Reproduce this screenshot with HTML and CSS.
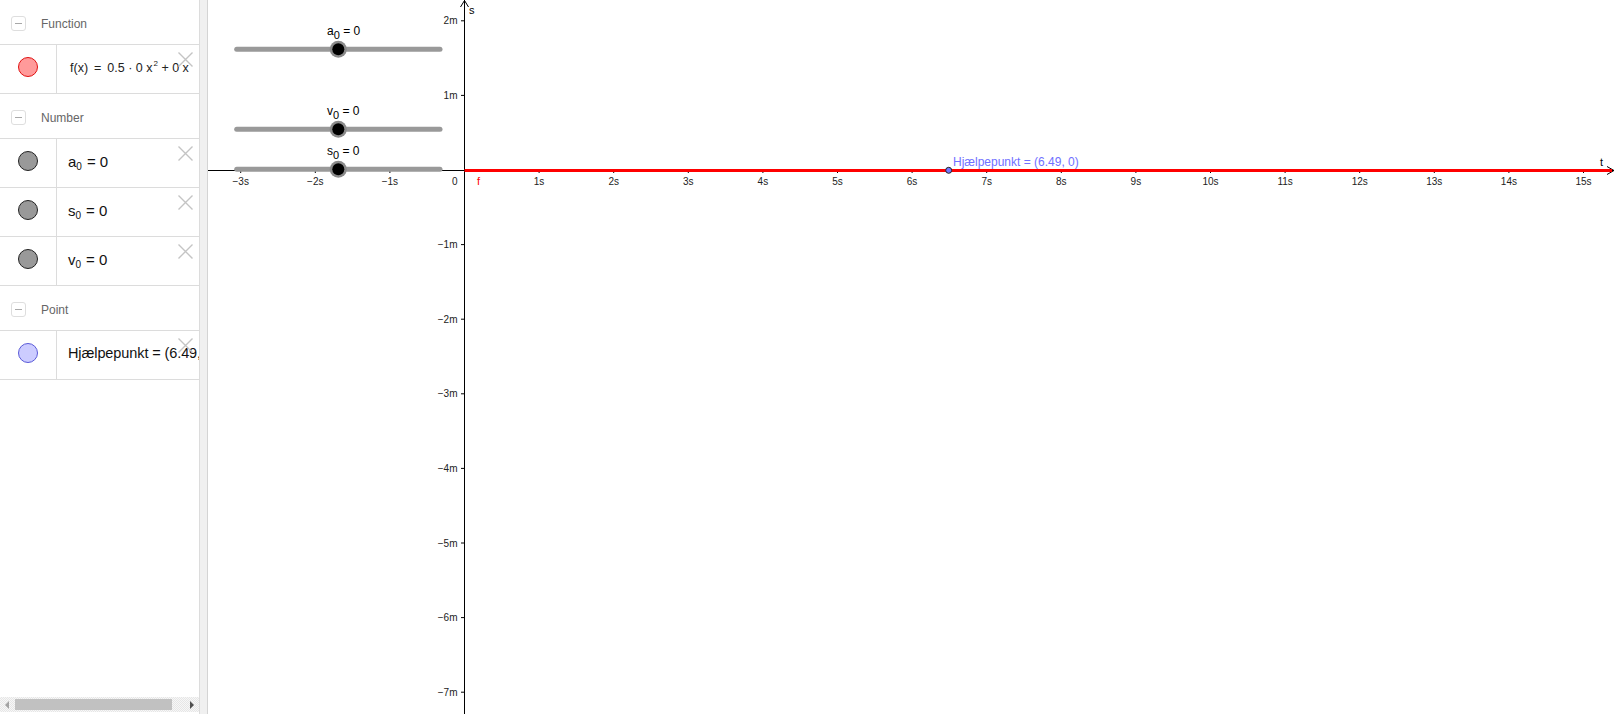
FILE: index.html
```html
<!DOCTYPE html>
<html>
<head>
<meta charset="utf-8">
<title>Graph</title>
<link rel="stylesheet" href="styles.css">
</head>
<body>
<div class="app">
  <aside class="algebra">
    <div class="list">
      <div class="group-head"><span class="toggle"></span><span class="group-name">Function</span></div>
      <div class="item">
        <div class="marker"><span class="dot dot-red"></span></div>
        <div class="formula formula-fn">f(x)&thinsp; = &thinsp;0.5 · 0 x<sup>2</sup> + 0 x</div>
        <svg class="del" viewBox="0 0 15 15"><path d="M0.5 0.5L14.5 14.5M14.5 0.5L0.5 14.5"/></svg>
      </div>

      <div class="group-head"><span class="toggle"></span><span class="group-name">Number</span></div>
      <div class="item">
        <div class="marker"><span class="dot dot-gray"></span></div>
        <div class="formula">a<sub>0</sub>&thinsp;= 0</div>
        <svg class="del" viewBox="0 0 15 15"><path d="M0.5 0.5L14.5 14.5M14.5 0.5L0.5 14.5"/></svg>
      </div>
      <div class="item">
        <div class="marker"><span class="dot dot-gray"></span></div>
        <div class="formula">s<sub>0</sub>&thinsp;= 0</div>
        <svg class="del" viewBox="0 0 15 15"><path d="M0.5 0.5L14.5 14.5M14.5 0.5L0.5 14.5"/></svg>
      </div>
      <div class="item">
        <div class="marker"><span class="dot dot-gray"></span></div>
        <div class="formula">v<sub>0</sub>&thinsp;= 0</div>
        <svg class="del" viewBox="0 0 15 15"><path d="M0.5 0.5L14.5 14.5M14.5 0.5L0.5 14.5"/></svg>
      </div>

      <div class="group-head"><span class="toggle"></span><span class="group-name">Point</span></div>
      <div class="item">
        <div class="marker"><span class="dot dot-blue"></span></div>
        <div class="formula formula-pt">Hjælpepunkt = (6.49, 0)</div>
        <svg class="del" viewBox="0 0 15 15"><path d="M0.5 0.5L14.5 14.5M14.5 0.5L0.5 14.5"/></svg>
      </div>
    </div>
    <div class="hscroll">
      <span class="arrow arrow-left"></span>
      <span class="thumb"></span>
      <span class="arrow arrow-right"></span>
    </div>
  </aside>
  <div class="splitter"></div>
  <main class="graphics">
    <svg class="canvas" viewBox="208 0 1408 714" width="1408" height="714">
      <g class="axis">
        <path d="M208 170.5H1614"/>
        <path d="M464.5 0V714"/>
        <path d="M1607 166.5L1614 170.5L1607 174.5"/>
        <path d="M460.5 7L464.5 0.5L468.5 7"/>
        <path class="ticks" d="M240.7 170v3M315.3 170v3M389.9 170v3M539.1 170v3M613.7 170v3M688.3 170v3M762.9 170v3M837.5 170v3M912.1 170v3M986.7 170v3M1061.3 170v3M1135.9 170v3M1210.5 170v3M1285.1 170v3M1359.7 170v3M1434.3 170v3M1508.9 170v3M1583.5 170v3M461 20.8h3.5M461 95.4h3.5M461 244.6h3.5M461 319.2h3.5M461 393.8h3.5M461 468.4h3.5M461 543h3.5M461 617.6h3.5M461 692.2h3.5"/>
      </g>
      <g class="xlabels">
        <text x="240.7" y="184.5">−3s</text>
        <text x="315.3" y="184.5">−2s</text>
        <text x="389.9" y="184.5">−1s</text>
        <text x="539.1" y="184.5">1s</text>
        <text x="613.7" y="184.5">2s</text>
        <text x="688.3" y="184.5">3s</text>
        <text x="762.9" y="184.5">4s</text>
        <text x="837.5" y="184.5">5s</text>
        <text x="912.1" y="184.5">6s</text>
        <text x="986.7" y="184.5">7s</text>
        <text x="1061.3" y="184.5">8s</text>
        <text x="1135.9" y="184.5">9s</text>
        <text x="1210.5" y="184.5">10s</text>
        <text x="1285.1" y="184.5">11s</text>
        <text x="1359.7" y="184.5">12s</text>
        <text x="1434.3" y="184.5">13s</text>
        <text x="1508.9" y="184.5">14s</text>
        <text x="1583.5" y="184.5">15s</text>
      </g>
      <g class="ylabels">
        <text x="457.5" y="24.3">2m</text>
        <text x="457.5" y="98.9">1m</text>
        <text x="457.5" y="184.5">0</text>
        <text x="457.5" y="248.1">−1m</text>
        <text x="457.5" y="322.7">−2m</text>
        <text x="457.5" y="397.3">−3m</text>
        <text x="457.5" y="471.9">−4m</text>
        <text x="457.5" y="546.5">−5m</text>
        <text x="457.5" y="621.1">−6m</text>
        <text x="457.5" y="695.7">−7m</text>
      </g>
      <text class="axis-name" x="469" y="14">s</text>
      <text class="axis-name" x="1600" y="166">t</text>

      <path class="fn" d="M464.5 170.5H1612"/>
      <text class="fn-label" x="477" y="185">f</text>

      <g class="slider">
        <path class="track" d="M236.7 49.3H440"/>
        <circle class="halo" cx="338.3" cy="49.3" r="8.5"/>
        <circle class="knob" cx="338.3" cy="49.3" r="6"/>
        <text class="slider-label" x="327" y="35">a<tspan class="sub" dy="4">0</tspan><tspan dy="-4"> = 0</tspan></text>
      </g>
      <g class="slider">
        <path class="track" d="M236.7 129.3H440"/>
        <circle class="halo" cx="338.3" cy="129.3" r="8.5"/>
        <circle class="knob" cx="338.3" cy="129.3" r="6"/>
        <text class="slider-label" x="327" y="114.5">v<tspan class="sub" dy="4">0</tspan><tspan dy="-4"> = 0</tspan></text>
      </g>
      <g class="slider">
        <path class="track" d="M236.7 169.3H440"/>
        <circle class="halo" cx="338.3" cy="169.3" r="8.5"/>
        <circle class="knob" cx="338.3" cy="169.3" r="6"/>
        <text class="slider-label" x="327" y="154.5">s<tspan class="sub" dy="4">0</tspan><tspan dy="-4"> = 0</tspan></text>
      </g>

      <circle class="pt" cx="948.7" cy="170.3" r="3"/>
      <text class="pt-label" x="953" y="166">Hjælpepunkt = (6.49, 0)</text>
    </svg>
  </main>
</div>
</body>
</html>
```

FILE: styles.css
```css
* { box-sizing: border-box; }
html, body { margin: 0; padding: 0; background: #fff; }
body { font-family: "Liberation Sans", Arial, sans-serif; overflow: hidden; }

.app {
  display: flex;
  width: 1616px;
  height: 714px;
}

/* ---------- algebra panel ---------- */
.algebra {
  width: 200px;
  flex: none;
  display: flex;
  flex-direction: column;
  border-right: 1px solid #dcdcdc;
  background: #fff;
}
.list { flex: 1; overflow: hidden; }

.group-head {
  height: 45px;
  border-bottom: 1px solid #dcdcdc;
  display: flex;
  align-items: center;
  padding: 3px 0 0 11px;
}
.toggle {
  width: 15px;
  height: 15px;
  border: 1px solid #dedede;
  border-radius: 3px;
  position: relative;
  flex: none;
}
.toggle::after {
  content: "";
  position: absolute;
  left: 3px;
  top: 6px;
  width: 7px;
  height: 1px;
  background: #a8a8a8;
}
.group-name {
  margin-left: 15px;
  font-size: 12px;
  color: #666;
}

.item {
  height: 49px;
  border-bottom: 1px solid #dcdcdc;
  display: flex;
  position: relative;
}
.marker {
  width: 57px;
  flex: none;
  border-right: 1px solid #dcdcdc;
  display: flex;
  align-items: center;
  justify-content: center;
  padding-bottom: 4px;
}
.dot {
  width: 20px;
  height: 20px;
  border-radius: 50%;
  border: 1px solid #000;
}
.dot-red { background: #ff9a9a; border-color: #e01010; }
.dot-gray { background: #999; border-color: #222; }
.dot-blue { background: #ccccff; border-color: #5a5ad8; }

.formula {
  flex: 1;
  min-width: 0;
  overflow: hidden;
  white-space: nowrap;
  padding-left: 11px;
  line-height: 45px;
  font-size: 15px;
  color: #111;
}
.formula sub {
  font-size: 10px;
  vertical-align: -3px;
  line-height: 1;
  margin-right: 2px;
}
.formula-fn {
  font-size: 12.5px;
  color: #222;
  padding-left: 13px;
  white-space: pre;
  line-height: 46px;
}
.formula-fn sup {
  font-size: 8px;
  vertical-align: 6px;
  line-height: 1;
  margin-left: 1px;
}
.formula-pt { font-size: 14.5px; letter-spacing: -0.1px; }
.del {
  position: absolute;
  top: 7px;
  right: 6px;
  width: 15px;
  height: 15px;
  fill: none;
  stroke: #c4c4c4;
  stroke-width: 1.4;
}

.hscroll {
  height: 15px;
  margin-bottom: 2px;
  display: flex;
  align-items: center;
  background: repeating-conic-gradient(#e6e6e6 0 25%, #f7f7f7 0 50%) 0 0 / 2px 2px;
}
.arrow {
  width: 15px;
  height: 15px;
  flex: none;
  position: relative;
}
.arrow-left::after,
.arrow-right::after {
  content: "";
  position: absolute;
  top: 4px;
  border-top: 4px solid transparent;
  border-bottom: 4px solid transparent;
}
.arrow-left::after { left: 5px; border-right: 4px solid #a3a3a3; }
.arrow-right::after { left: 6px; border-left: 4px solid #505050; }
.thumb {
  width: 157px;
  height: 11px;
  background: #c1c1c1;
  flex: none;
}
.arrow-right { margin-left: auto; }

.splitter {
  width: 8px;
  flex: none;
  background: #f0f0f0;
  border-right: 1px solid #d4d4d4;
}

/* ---------- graphics view ---------- */
.graphics {
  flex: 1;
  position: relative;
  overflow: hidden;
}
.canvas { display: block; }

.axis path { fill: none; stroke: #000; stroke-width: 1; }
.xlabels text, .ylabels text {
  font-family: "Liberation Sans", Arial, sans-serif;
  font-size: 10px;
  fill: #222;
}
.xlabels text { text-anchor: middle; }
.ylabels text { text-anchor: end; }
.axis-name {
  font-family: "Liberation Sans", Arial, sans-serif;
  font-size: 11px;
  fill: #000;
}

.fn { fill: none; stroke: #ff0000; stroke-width: 3; }
.fn-label {
  font-family: "Liberation Sans", Arial, sans-serif;
  font-size: 11px;
  fill: #ff0000;
}

.slider .track { fill: none; stroke: #999; stroke-width: 5; stroke-linecap: round; }
.slider .halo { fill: #8a8a8a; }
.slider .knob { fill: #000; }
.slider-label {
  font-family: "Liberation Sans", Arial, sans-serif;
  font-size: 12px;
  fill: #000;
}
.slider-label .sub { font-size: 11px; }

.pt { fill: #7478ff; stroke: #222; stroke-width: 1; }
.pt-label {
  font-family: "Liberation Sans", Arial, sans-serif;
  font-size: 12px;
  fill: #7070ff;
}
```
